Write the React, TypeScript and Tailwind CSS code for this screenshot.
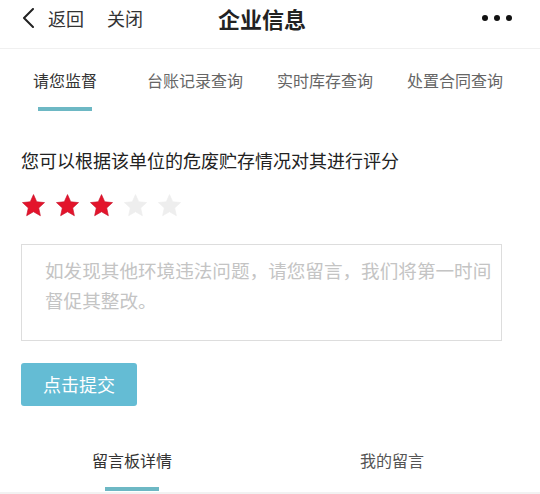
const font = { fontFamily: '"Noto Sans CJK SC", "Noto Sans", sans-serif' }

const topTabs = ['请您监督', '台账记录查询', '实时库存查询', '处置合同查询']

function Star({ on }: { on: boolean }) {
  return (
    <svg viewBox="0 0 24 24" className="h-[25px] w-[25px]">
      <polygon
        points="12,1.5 15.1,8.4 22.6,9.2 17,14.3 18.6,21.8 12,18 5.4,21.8 7,14.3 1.4,9.2 8.9,8.4"
        fill={on ? '#e3142b' : '#eeeeee'}
        stroke={on ? '#c8102a' : '#eeeeee'}
        strokeWidth="0.6"
        strokeLinejoin="round"
      />
    </svg>
  )
}

export default function App() {
  return (
    <div className="h-[494px] w-[540px] overflow-hidden bg-white text-[#333]" style={font}>
      <div className="flex h-[49px] items-start border-b border-[#f0f0f0] pt-[7px]">
        <svg viewBox="0 0 12 20" className="ml-[22px] mt-[1px] h-[20px] w-[12px]" fill="none" stroke="#222" strokeWidth="2" strokeLinecap="round" strokeLinejoin="round">
          <path d="M11 1 L2 10 L11 19" />
        </svg>
        <span className="ml-[14px] text-[18px] leading-[22px] text-[#333]">返回</span>
        <span className="ml-[23px] text-[18px] leading-[22px] text-[#333]">关闭</span>
        <span className="ml-[75px] text-[22px] font-bold leading-[22px] text-[#222]">企业信息</span>
        <div className="ml-auto mr-[28px] mt-[8px] flex gap-[6px]">
          <span className="h-[6px] w-[6px] rounded-full bg-[#111]" />
          <span className="h-[6px] w-[6px] rounded-full bg-[#111]" />
          <span className="h-[6px] w-[6px] rounded-full bg-[#111]" />
        </div>
      </div>

      <div className="flex">
        {topTabs.map((t, i) => (
          <div key={t} className="flex w-[130px] shrink-0 flex-col items-center pt-[23px]">
            <span className={`text-[16px] leading-[16px] ${i === 0 ? 'text-[#333]' : 'text-[#666]'}`}>{t}</span>
            <span className={`mt-[19px] h-[4px] w-[54px] ${i === 0 ? 'bg-[#6db8c4]' : 'bg-transparent'}`} />
          </div>
        ))}
      </div>

      <div className="px-[21px]">
        <p className="mt-[39px] text-[18px] leading-[20px] text-[#222]">您可以根据该单位的危废贮存情况对其进行评分</p>
        <div className="mt-[23px] flex gap-[9px]">
          {[1, 2, 3, 4, 5].map(n => <Star key={n} on={n <= 3} />)}
        </div>
        <div className="mt-[26px] h-[97px] w-[481px] border border-[#dddddd] pl-[23px] pr-[8px] pt-[10px] text-[18.6px] leading-[30px] text-[#c4c4c4]">
          如发现其他环境违法问题，请您留言，我们将第一时间督促其整改。
        </div>
        <button className="mt-[22px] flex h-[43px] w-[116px] items-center justify-center rounded-[3px] bg-[#64bcd4] text-[18px] text-white">
          点击提交
        </button>
      </div>

      <div className="ml-[2px] mt-[45px] flex">
        {['留言板详情', '我的留言'].map((t, i) => (
          <div key={t} className="flex w-[260px] flex-col items-center">
            <span className={`text-[16px] leading-[18px] ${i === 0 ? 'text-[#333]' : 'text-[#555]'}`}>{t}</span>
            <span className={`mt-[18px] h-[4px] w-[54px] ${i === 0 ? 'bg-[#6db8c4]' : 'bg-transparent'}`} />
          </div>
        ))}
      </div>
      <div className="mt-[1px] h-[4px] bg-[#f2f2f2]" />
    </div>
  )
}
